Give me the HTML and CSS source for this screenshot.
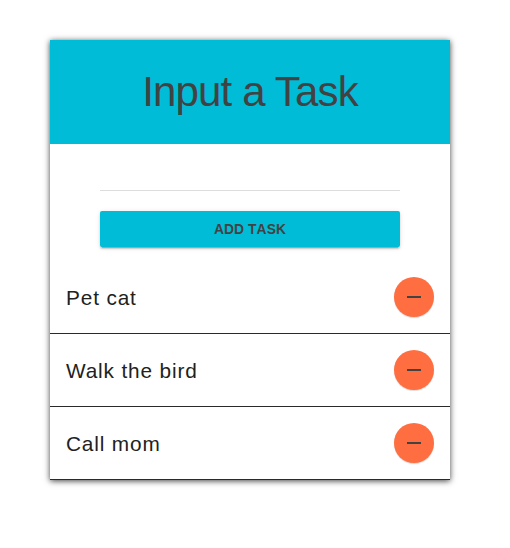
FILE: index.html
```html
<!DOCTYPE html>
<html lang="en">
<head>
<meta charset="utf-8">
<title>Tasks</title>
<link rel="stylesheet" href="styles.css">
</head>
<body>
<main class="card">
  <header class="header"><h1 class="title">Input a Task</h1></header>
  <form class="form">
    <input class="field" type="text" aria-label="Task">
    <button class="add" type="button">Add Task</button>
  </form>
  <ul class="list">
    <li class="item"><span class="name">Pet cat</span><button class="remove" type="button" aria-label="Remove"><svg width="24" height="24" viewBox="0 0 24 24"><path d="M19 13H5v-2h14v2z"/></svg></button></li>
    <li class="item"><span class="name">Walk the bird</span><button class="remove" type="button" aria-label="Remove"><svg width="24" height="24" viewBox="0 0 24 24"><path d="M19 13H5v-2h14v2z"/></svg></button></li>
    <li class="item"><span class="name">Call mom</span><button class="remove" type="button" aria-label="Remove"><svg width="24" height="24" viewBox="0 0 24 24"><path d="M19 13H5v-2h14v2z"/></svg></button></li>
  </ul>
</main>
</body>
</html>
```
FILE: styles.css
```css
* { box-sizing: border-box; }
body {
  margin: 0;
  padding: 40px 50px;
  background: #fff;
  font-family: "Liberation Sans", Arial, sans-serif;
}
.card {
  width: 400px;
  height: 440px;
  box-shadow: 0 1px 6px rgba(0,0,0,.75);
}
.header {
  height: 104px;
  background: #00bcd7;
  display: flex;
  justify-content: center;
}
.title {
  margin: 28px 0 0;
  font-size: 42px;
  line-height: 48px;
  font-weight: 400;
  letter-spacing: -.84px;
  color: #424242;
}
.form {
  display: flex;
  flex-direction: column;
  padding: 14px 50px;
  height: 117px;
}
.field {
  height: 33px;
  padding: 0;
  border: 0;
  border-bottom: 1px solid #ddd;
  outline: 0;
  background: none;
}
.add {
  margin-top: 20px;
  height: 36px;
  flex: none;
  padding: 2px 0 0;
  border: 0;
  border-radius: 2px;
  background: #00bcd7;
  color: #424242;
  font: 700 13.8px/34px "Liberation Sans", Arial, sans-serif;
  font-kerning: none;
  letter-spacing: .1px;
  text-transform: uppercase;
  box-shadow: 0 2px 2px rgba(0,0,0,.14), 0 3px 1px -2px rgba(0,0,0,.2), 0 1px 5px rgba(0,0,0,.12);
}
.list {
  margin: 0;
  padding: 0;
  list-style: none;
}
.item {
  display: flex;
  align-items: center;
  justify-content: space-between;
  height: 73px;
  padding: 0 16px;
  border-bottom: 1px solid #2a2a2a;
}
.name {
  padding-top: 1px;
  font-size: 20.8px;
  letter-spacing: .85px;
  color: #212121;
}
.remove {
  display: flex;
  align-items: center;
  justify-content: center;
  width: 40px;
  height: 40px;
  padding: 0;
  border: 0;
  border-radius: 50%;
  background: #ff6e40;
  box-shadow: 0 1px 1px rgba(0,0,0,.15);
}
.remove svg { fill: #424242; }
```
